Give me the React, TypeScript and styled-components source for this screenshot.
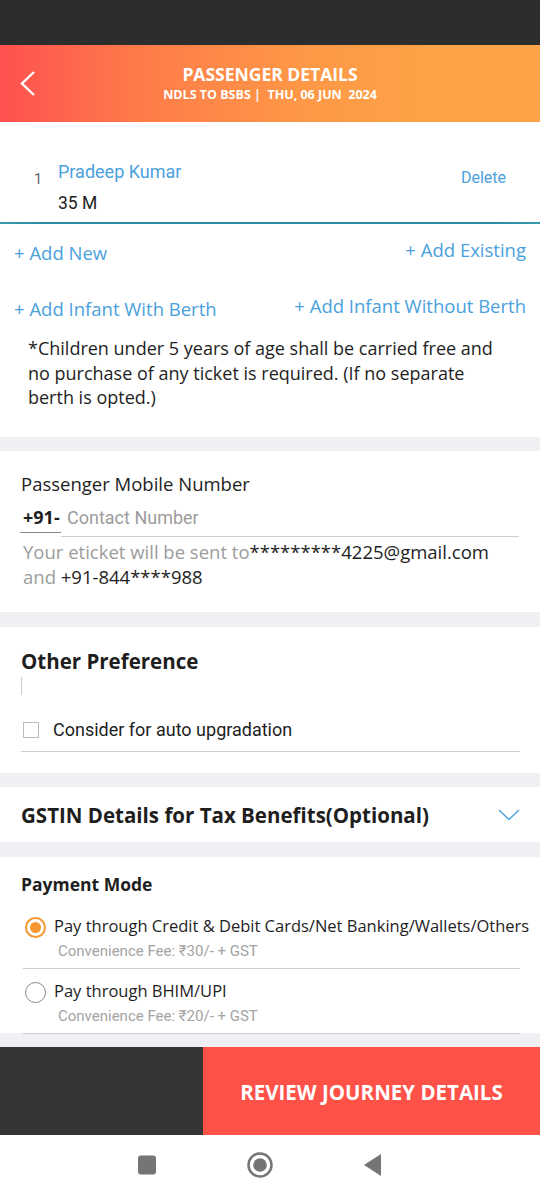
import React, { useState } from 'react';
import styled, { createGlobalStyle } from 'styled-components';

const GlobalStyle = createGlobalStyle`
  html, body {
    margin: 0;
    padding: 0;
    background: #efeff4;
    font-family: 'Open Sans', 'Noto Sans', sans-serif;
    -webkit-font-smoothing: antialiased;
  }
  * { box-sizing: border-box; }
`;

const COLORS = {
  blue: '#4aa1dd',
  teal: '#2a8ea3',
  text: '#1e1e1e',
  gray: '#9c9c9c',
  line: '#cfcfcf',
  orange: '#f5962f',
  red: '#fe5249',
  dark: '#353535',
};

const Screen = styled.div`
  width: 540px;
  height: 1200px;
  display: flex;
  flex-direction: column;
  background: #efeff4;
  overflow: hidden;
`;

const StatusBar = styled.div`
  height: 45px;
  flex: none;
  background: #2d2d2d;
`;

const Header = styled.header`
  height: 77px;
  flex: none;
  display: flex;
  align-items: center;
  background: linear-gradient(90deg, #fe5150 0%, #fe7a4a 25%, #fe9746 55%, #fea347 80%, #fea347 100%);
  color: #fff;
`;

const BackButton = styled.button`
  width: 52px;
  height: 77px;
  border: 0;
  background: transparent;
  display: flex;
  align-items: center;
  padding-left: 19px;
  cursor: pointer;
`;

const HeaderTitles = styled.div`
  flex: 1;
  display: flex;
  flex-direction: column;
  align-items: center;
  margin-right: 52px;
  padding-top: 1px;
`;

const Title = styled.div`
  font-weight: 700;
  font-size: 17.5px;
  line-height: 22px;
`;

const Subtitle = styled.div`
  font-weight: 700;
  font-size: 12.5px;
  line-height: 20px;
  white-space: pre;
`;

const Content = styled.main`
  flex: 1;
  display: flex;
  flex-direction: column;
`;

interface CardProps {
  $h: number;
  $gap?: number;
}

const Card = styled.section<CardProps>`
  background: #fff;
  height: ${(p) => p.$h}px;
  margin-bottom: ${(p) => p.$gap ?? 14}px;
  flex: none;
  display: flex;
  flex-direction: column;
`;

const PassengerRow = styled.div`
  display: flex;
  padding: 38px 34px 0 34px;
`;

const Index = styled.div`
  width: 24px;
  font-family: Roboto, sans-serif;
  font-size: 14.5px;
  color: #666;
  padding-top: 11px;
`;

const PassengerInfo = styled.div`
  flex: 1;
  display: flex;
  flex-direction: column;
`;

const PassengerName = styled.div`
  font-family: Roboto, sans-serif;
  font-size: 18px;
  line-height: 24px;
  color: ${COLORS.blue};
`;

const PassengerMeta = styled.div`
  font-family: Roboto, sans-serif;
  font-size: 17.5px;
  line-height: 24px;
  color: ${COLORS.text};
  margin-top: 7px;
`;

const DeleteLink = styled.div`
  font-family: Roboto, sans-serif;
  font-size: 16px;
  color: ${COLORS.blue};
  padding-top: 8px;
`;

const TealLine = styled.div`
  height: 2px;
  background: linear-gradient(90deg, #3a9aad 0%, ${COLORS.teal} 8%, ${COLORS.teal} 92%, #3a9aad 100%);
  margin-top: 7px;
`;

const LinkRow = styled.div<{ $top: number }>`
  display: flex;
  justify-content: space-between;
  align-items: flex-start;
  padding: 0 14px;
  margin-top: ${(p) => p.$top}px;
`;

const AddLink = styled.div<{ $drop?: boolean }>`
  font-size: 18.5px;
  line-height: 24px;
  color: ${COLORS.blue};
  margin-top: ${(p) => (p.$drop ? 3 : 0)}px;
  white-space: nowrap;
`;

const Note = styled.p`
  margin: 15px 0 0;
  padding: 0 40px 0 28px;
  font-size: 18px;
  line-height: 24.5px;
  color: ${COLORS.text};
`;

const SectionLabel = styled.div`
  font-size: 18.5px;
  line-height: 24px;
  color: ${COLORS.text};
  padding: 21px 21px 0;
`;

const PhoneRow = styled.div`
  display: flex;
  align-items: flex-start;
  margin: 9px 21px 0 20px;
`;

const Prefix = styled.div`
  font-weight: 700;
  font-size: 18px;
  line-height: 24px;
  color: ${COLORS.text};
  padding: 0 0 3px 3px;
  width: 41px;
  border-bottom: 1px solid #888;
`;

const PhoneInput = styled.input`
  flex: 1;
  border: 0;
  border-bottom: 1px solid ${COLORS.line};
  font-family: Roboto, sans-serif;
  font-size: 18px;
  line-height: 24px;
  height: 32px;
  padding: 0 0 7px 6px;
  outline: none;
  color: ${COLORS.text};
  background: transparent;
  &::placeholder {
    color: ${COLORS.gray};
  }
`;

const InfoText = styled.div`
  font-size: 18.5px;
  line-height: 25px;
  color: ${COLORS.gray};
  padding: 2px 30px 0 23px;
`;

const Strong = styled.span`
  color: ${COLORS.text};
`;

const Heading = styled.h2<{ $size: number }>`
  margin: 0;
  font-size: ${(p) => p.$size}px;
  line-height: 28px;
  font-weight: 700;
  color: ${COLORS.text};
`;

const PrefBody = styled.div`
  padding: 20px 20px 0 21px;
  display: flex;
  flex-direction: column;
`;

const Caret = styled.div`
  width: 1px;
  height: 18px;
  background: #ccc;
  margin-top: 2px;
`;

const CheckRow = styled.label`
  display: flex;
  align-items: center;
  gap: 14px;
  margin-top: 23px;
  padding: 0 0 9px 2px;
  border-bottom: 1px solid ${COLORS.line};
  cursor: pointer;
`;

const CheckBox = styled.span`
  width: 16px;
  height: 16px;
  border: 1px solid #bdbdbd;
  flex: none;
`;

const CheckLabel = styled.span`
  font-family: Roboto, sans-serif;
  font-size: 18px;
  line-height: 24px;
  color: ${COLORS.text};
`;

const Collapse = styled.div`
  height: 100%;
  display: flex;
  align-items: center;
  justify-content: space-between;
  padding: 1px 20px 0 21px;
`;

const PaymentBody = styled.div`
  padding: 13px 0 0 0;
  display: flex;
  flex-direction: column;
`;

const PaymentTitle = styled.div`
  padding-left: 21px;
  font-size: 17.5px;
  line-height: 28px;
  font-weight: 700;
  color: ${COLORS.text};
`;

const Option = styled.div<{ $first?: boolean }>`
  display: flex;
  flex-direction: column;
  margin: ${(p) => (p.$first ? 16 : 10)}px 20px 0 23px;
  padding-bottom: 7px;
  border-bottom: 1px solid ${COLORS.line};
  cursor: pointer;
`;

const OptionMain = styled.div`
  display: flex;
  align-items: center;
  gap: 8px;
`;

const Radio = styled.span<{ $on?: boolean }>`
  width: 21px;
  height: 21px;
  margin: 2px 0 0 2px;
  border-radius: 50%;
  border: ${(p) => (p.$on ? `2px solid ${COLORS.orange}` : '1.5px solid #8a8a8a')};
  display: flex;
  align-items: center;
  justify-content: center;
  flex: none;
  &::after {
    content: '';
    width: 11px;
    height: 11px;
    border-radius: 50%;
    background: ${(p) => (p.$on ? COLORS.orange : 'transparent')};
  }
`;

const OptionLabel = styled.span`
  font-size: 16.5px;
  line-height: 24px;
  color: ${COLORS.text};
  white-space: nowrap;
`;

const Fee = styled.div`
  font-family: Roboto, sans-serif;
  font-size: 15px;
  line-height: 20px;
  color: #a3a3a3;
  padding-left: 35px;
  margin-top: 3px;
`;

const BottomBar = styled.div`
  height: 88px;
  flex: none;
  display: flex;
`;

const Summary = styled.div`
  width: 203px;
  background: ${COLORS.dark};
`;

const ReviewButton = styled.button`
  flex: 1;
  border: 0;
  background: ${COLORS.red};
  color: #fff;
  font-family: 'Open Sans', sans-serif;
  font-weight: 700;
  font-size: 20.5px;
  padding-top: 2px;
  cursor: pointer;
`;

const NavBar = styled.nav`
  height: 65px;
  flex: none;
  background: #fff;
  display: flex;
  align-items: center;
  justify-content: center;
  padding: 0 21px 5px 0;
`;

const NavSlot = styled.div`
  width: 113px;
  display: flex;
  justify-content: center;
`;

const payments = [
  { label: 'Pay through Credit & Debit Cards/Net Banking/Wallets/Others', fee: 'Convenience Fee: ₹30/- + GST' },
  { label: 'Pay through BHIM/UPI', fee: 'Convenience Fee: ₹20/- + GST' },
];

export default function App() {
  const [selected, setSelected] = useState(0);

  return (
    <>
      <GlobalStyle />
      <Screen>
        <StatusBar />
        <Header>
          <BackButton type="button" aria-label="Back">
            <svg width="18" height="28" viewBox="0 0 18 28">
              <polyline points="15,2 3,13.5 15,25" fill="none" stroke="#fff" strokeWidth="2.4" />
            </svg>
          </BackButton>
          <HeaderTitles>
            <Title>PASSENGER DETAILS</Title>
            <Subtitle>{'NDLS TO BSBS |  THU, 06 JUN  2024'}</Subtitle>
          </HeaderTitles>
        </Header>

        <Content>
          <Card $h={315}>
            <PassengerRow>
              <Index>1</Index>
              <PassengerInfo>
                <PassengerName>Pradeep Kumar</PassengerName>
                <PassengerMeta>35 M</PassengerMeta>
              </PassengerInfo>
              <DeleteLink>Delete</DeleteLink>
            </PassengerRow>
            <TealLine />
            <LinkRow $top={14}>
              <AddLink $drop>+ Add New</AddLink>
              <AddLink>+ Add Existing</AddLink>
            </LinkRow>
            <LinkRow $top={29}>
              <AddLink $drop>+ Add Infant With Berth</AddLink>
              <AddLink>+ Add Infant Without Berth</AddLink>
            </LinkRow>
            <Note>
              *Children under 5 years of age shall be carried free and no purchase of any ticket is required. (If no
              separate berth is opted.)
            </Note>
          </Card>

          <Card $h={161} $gap={15}>
            <SectionLabel>Passenger Mobile Number</SectionLabel>
            <PhoneRow>
              <Prefix>+91-</Prefix>
              <PhoneInput placeholder="Contact Number" />
            </PhoneRow>
            <InfoText>
              Your eticket will be sent to<Strong>*********4225@gmail.com</Strong> and <Strong>+91-844****988</Strong>
            </InfoText>
          </Card>

          <Card $h={146}>
            <PrefBody>
              <Heading $size={20.5}>Other Preference</Heading>
              <Caret />
              <CheckRow>
                <CheckBox />
                <CheckLabel>Consider for auto upgradation</CheckLabel>
              </CheckRow>
            </PrefBody>
          </Card>

          <Card $h={55} $gap={15}>
            <Collapse>
              <Heading $size={20.5}>GSTIN Details for Tax Benefits(Optional)</Heading>
              <svg width="22" height="14" viewBox="0 0 22 14">
                <polyline points="1,2 11,11.5 21,2" fill="none" stroke={COLORS.blue} strokeWidth="1.4" />
              </svg>
            </Collapse>
          </Card>

          <Card $h={176}>
            <PaymentBody>
              <PaymentTitle>Payment Mode</PaymentTitle>
              {payments.map((p, i) => (
                <Option key={p.label} $first={i === 0} onClick={() => setSelected(i)}>
                  <OptionMain>
                    <Radio $on={selected === i} />
                    <OptionLabel>{p.label}</OptionLabel>
                  </OptionMain>
                  <Fee>{p.fee}</Fee>
                </Option>
              ))}
            </PaymentBody>
          </Card>
        </Content>

        <BottomBar>
          <Summary />
          <ReviewButton type="button">REVIEW JOURNEY DETAILS</ReviewButton>
        </BottomBar>

        <NavBar>
          <NavSlot>
            <svg width="20" height="20" viewBox="0 0 20 20">
              <rect x="1" y="0.5" width="18" height="19" rx="3" fill="#757575" />
            </svg>
          </NavSlot>
          <NavSlot>
            <svg width="28" height="28" viewBox="0 0 28 28">
              <circle cx="14" cy="14" r="11.5" fill="none" stroke="#757575" strokeWidth="2.5" />
              <circle cx="14" cy="14" r="6.8" fill="#757575" />
            </svg>
          </NavSlot>
          <NavSlot>
            <svg width="20" height="24" viewBox="0 0 20 24">
              <polygon points="18,1 18,23 1,12" fill="#757575" strokeLinejoin="round" />
            </svg>
          </NavSlot>
        </NavBar>
      </Screen>
    </>
  );
}
